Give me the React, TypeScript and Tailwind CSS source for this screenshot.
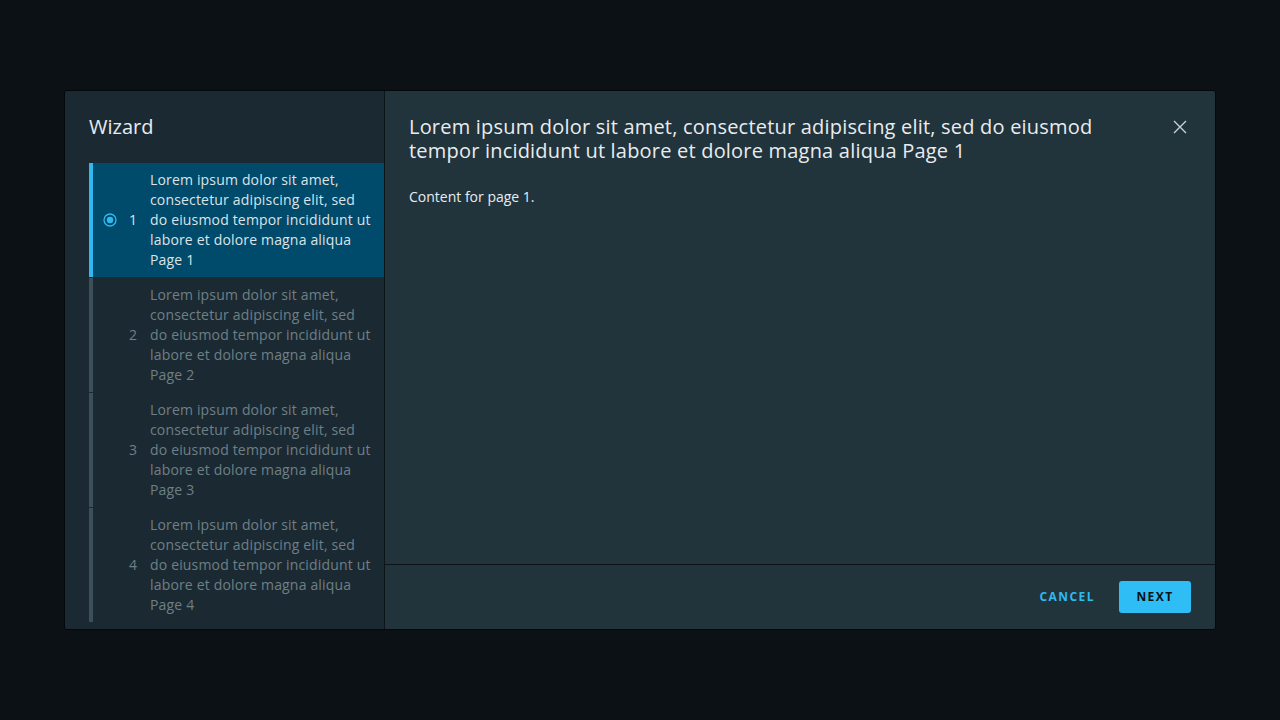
import React from "react";

const LOREM =
  "Lorem ipsum dolor sit amet, consectetur adipiscing elit, sed do eiusmod tempor incididunt ut labore et dolore magna aliqua";

function Step({ n, active }: { n: number; active?: boolean }) {
  return (
    <div
      className={
        "flex items-center border-l-4 pl-[10px] pr-[13px] py-[7px] " +
        (active
          ? "border-[#2fb9f0] bg-[#004a6b] text-[#dde3e6]"
          : "border-[#3d4f58] text-[#6f7f86]")
      }
    >
      <div className="w-[14px] h-[14px] flex items-center justify-center">
        {active && (
          <svg width="14" height="14" viewBox="0 0 14 14">
            <circle cx="7" cy="7" r="6" fill="none" stroke="#2fb9f0" strokeWidth="1.3" />
            <circle cx="7" cy="7" r="3.2" fill="#2fb9f0" />
          </svg>
        )}
      </div>
      <div className="w-[14px] ml-[6px] text-right text-[14px] leading-[20px]">{n}</div>
      <div className="ml-[13px] flex-1 text-[14px] leading-[20px] tracking-[0.012em]">
        {LOREM} Page {n}
      </div>
    </div>
  );
}

export default function App() {
  return (
    <div
      className="w-[1280px] h-[720px] bg-[#0b1115] pt-[90px] pl-[64px]"
      style={{ fontFamily: "'Open Sans', 'Noto Sans', sans-serif" }}
    >
      <div className="w-[1152px] h-[540px] flex rounded-[3px] overflow-hidden border border-[#05090b]">
        <div className="w-[319px] bg-[#1b2a32] pl-[24px] flex flex-col">
          <div className="pt-[22px] h-[72px] text-[20px] leading-[28px] text-[#e9ecef]">Wizard</div>
          <div className="flex flex-col gap-[1px]">
            <Step n={1} active />
            <Step n={2} />
            <Step n={3} />
            <Step n={4} />
          </div>
        </div>
        <div className="flex-1 bg-[#21333b] border-l border-[#0c1418] flex flex-col">
          <div className="flex-1 px-[24px] pt-[24px]">
            <div className="flex items-start">
              <div className="flex-1 pr-[50px] text-[20px] leading-[24px] tracking-[0.01em] text-[#e9ecef]">
                {LOREM} Page 1
              </div>
              <button className="mt-[5px] mr-[4px] text-[#c9d2d6]">
                <svg width="14" height="14" viewBox="0 0 14 14">
                  <path d="M1 1 L13 13 M13 1 L1 13" stroke="#c9d2d6" strokeWidth="1.4" />
                </svg>
              </button>
            </div>
            <div className="mt-[24px] text-[14px] leading-[20px] text-[#e9ecef]">Content for page 1.</div>
          </div>
          <div className="h-[65px] border-t border-[#0c1418] flex items-start justify-end pt-[16px] pr-[24px] gap-[12px]">
            <button className="h-[32px] px-[12px] text-[12px] font-bold tracking-[0.12em] text-[#2fb9f0]">
              CANCEL
            </button>
            <button className="h-[32px] w-[72px] rounded-[3px] bg-[#2fbdf5] text-[12px] font-bold tracking-[0.12em] text-[#0b1115]">
              NEXT
            </button>
          </div>
        </div>
      </div>
    </div>
  );
}
